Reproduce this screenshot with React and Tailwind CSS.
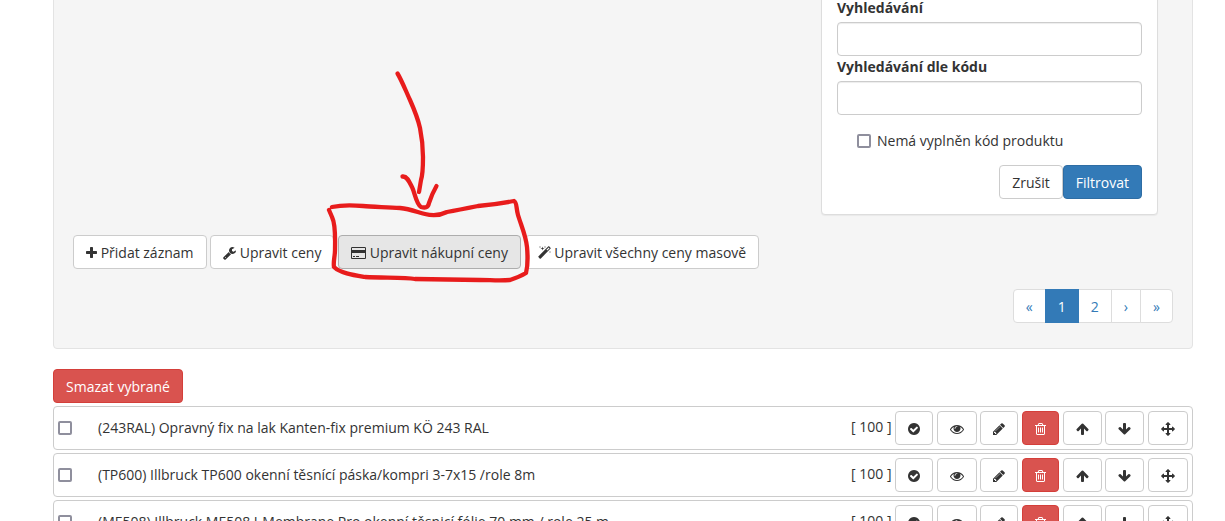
import { Fragment } from 'react'
import clsx from 'clsx'

// Icons share a 1792-unit em; each one keeps its own advance width.
const ICONS = {
  plus: {
    box: '192 0 1408 1792',
    size: 'w-[11px]',
    path: 'M1600 736v192q0 40-28 68t-68 28h-416v416q0 40-28 68t-68 28h-192q-40 0-68-28t-28-68v-416h-416q-40 0-68-28t-28-68v-192q0-40 28-68t68-28h416v-416q0-40 28-68t68-28h192q40 0 68 28t28 68v416h416q40 0 68 28t28 68z',
  },
  wrench: {
    box: '64 0 1664 1792',
    size: 'w-[13px]',
    path: 'M448 1472q0-26-19-45t-45-19-45 19-19 45 19 45 45 19 45-19 19-45zm644-420l-682 682q-37 37-90 37-52 0-91-37l-106-108q-38-36-38-90 0-53 38-91l681-681q39 98 114.5 173.5t173.5 114.5zm634-435q0 39-23 106-47 134-164.5 217.5t-258.5 83.5q-185 0-316.5-131.5t-131.5-316.5 131.5-316.5 316.5-131.5q58 0 121.5 16.5t107.5 46.5q16 11 16 28t-16 28l-293 169v224l193 107q5-3 79-48.5t135.5-81 70.5-35.5q15 0 23.5 10t8.5 25z',
  },
  card: {
    box: '0 0 1920 1792',
    size: 'w-[15px]',
    path: 'M1760 128q66 0 113 47t47 113v1216q0 66-47 113t-113 47h-1600q-66 0-113-47t-47-113v-1216q0-66 47-113t113-47h1600zm-1600 128q-13 0-22.500 9.500t-9.500 22.500v224h1664v-224q0-13-9.500-22.500t-22.500-9.500h-1600zm1600 1280q13 0 22.500-9.500t9.500-22.500v-608h-1664v608q0 13 9.500 22.500t22.500 9.500h1600zm-1504-128v-128h256v128h-256zm384 0v-128h384v128h-384z',
  },
  magic: {
    box: '64 0 1664 1792',
    size: 'w-[13px]',
    path: 'M1254 581l293-293-107-107-293 293zm447-293q0 27-18 45l-1286 1286q-18 18-45 18t-45-18l-198-198q-18-18-18-45t18-45l1286-1286q18-18 45-18t45 18l198 198q18 18 18 45zm-1351-190l98 30-98 30-30 98-30-98-98-30 98-30 30-98zm350 162l196 60-196 60-60 196-60-196-196-60 196-60 60-196zm930 478l98 30-98 30-30 98-30-98-98-30 98-30 30-98zm-640-640l98 30-98 30-30 98-30-98-98-30 98-30 30-98z',
  },
  check: {
    box: '128 0 1536 1792',
    size: 'w-[12px]',
    path: 'M1412 734q0-28-18-46l-91-90q-19-19-45-19t-45 19l-408 407-226-226q-19-19-45-19t-45 19l-91 90q-18 18-18 46 0 27 18 45l362 362q19 19 45 19 27 0 46-19l543-543q18-18 18-45zm252 162q0 209-103 385.5t-279.5 279.5-385.5 103-385.5-103-279.5-279.5-103-385.5 103-385.5 279.5-279.5 385.5-103 385.5 103 279.5 279.5 103 385.5z',
  },
  eye: {
    box: '0 0 1792 1792',
    size: 'w-[14px]',
    path: 'M1664 960q-152-236-381-353 61 104 61 225 0 185-131.5 316.5t-316.5 131.5-316.5-131.5-131.5-316.5q0-121 61-225-229 117-381 353 133 205 333.5 326.5t434.5 121.5 434.5-121.5 333.5-326.5zm-720-384q0-20-14-34t-34-14q-125 0-214.5 89.5t-89.5 214.5q0 20 14 34t34 14 34-14 14-34q0-86 61-147t147-61q20 0 34-14t14-34zm848 384q0 34-20 69-140 230-376.5 368.5t-499.5 138.5-499.5-139-376.5-368q-20-35-20-69t20-69q140-229 376.5-368t499.5-139 499.5 139 376.5 368q20 35 20 69z',
  },
  pencil: {
    box: '128 0 1536 1792',
    size: 'w-[12px]',
    path: 'M491 1536l91-91-235-235-91 91v107h128v128h107zm523-928q0-22-22-22-10 0-17 7l-542 542q-7 7-7 17 0 22 22 22 10 0 17-7l542-542q7-7 7-17zm-54-192l416 416-832 832h-416v-416zm683 96q0 53-37 90l-166 166-416-416 166-165q36-38 90-38 53 0 91 38l235 234q37 39 37 91z',
  },
  trash: {
    box: '192 0 1408 1792',
    size: 'w-[11px]',
    path: 'M704 736v576q0 14-9 23t-23 9h-64q-14 0-23-9t-9-23v-576q0-14 9-23t23-9h64q14 0 23 9t9 23zm256 0v576q0 14-9 23t-23 9h-64q-14 0-23-9t-9-23v-576q0-14 9-23t23-9h64q14 0 23 9t9 23zm256 0v576q0 14-9 23t-23 9h-64q-14 0-23-9t-9-23v-576q0-14 9-23t23-9h64q14 0 23 9t9 23zm128 724v-948h-896v948q0 22 7 40.5t14.5 27 10.5 8.5h832q3 0 10.5-8.5t14.5-27 7-40.5zm-672-1076h448l-48-117q-7-9-17-11h-317q-10 2-17 11zm928 32v64q0 14-9 23t-23 9h-96v948q0 83-47 143.5t-113 60.5h-832q-66 0-113-58.5t-47-141.5v-952h-96q-14 0-23-9t-9-23v-64q0-14 9-23t23-9h309l70-167q15-37 54-63t79-26h320q40 0 79 26t54 63l70 167h309q14 0 23 9t9 23z',
  },
  up: {
    box: '64 0 1664 1792',
    size: 'w-[13px]',
    path: 'M1675 971q0 51-37 90l-75 75q-38 38-91 38-54 0-90-38l-294-293v704q0 52-37.5 84.5t-90.5 32.5h-128q-53 0-90.5-32.5t-37.5-84.5v-704l-294 293q-36 38-90 38t-90-38l-75-75q-38-38-38-90 0-53 38-91l651-651q35-37 90-37 54 0 91 37l651 651q37 39 37 91z',
  },
  down: {
    box: '64 0 1664 1792',
    size: 'w-[13px]',
    path: 'M1675 832q0 53-37 90l-651 652q-39 37-91 37-53 0-90-37l-651-652q-38-36-38-90 0-53 38-91l74-75q39-37 91-37 53 0 90 37l294 294v-704q0-52 38-90t90-38h128q52 0 90 38t38 90v704l294-294q37-37 90-37 52 0 91 37l75 75q37 39 37 91z',
  },
  move: {
    box: '0 0 1792 1792',
    size: 'w-[14px]',
    path: 'M1792 896q0 26-19 45l-256 256q-19 19-45 19t-45-19-19-45v-128h-384v384h128q26 0 45 19t19 45-19 45l-256 256q-19 19-45 19t-45-19l-256-256q-19-19-19-45t19-45 45-19h128v-384h-384v128q0 26-19 45t-45 19-45-19l-256-256q-19-19-19-45t19-45l256-256q19-19 45-19t45 19 19 45v128h384v-384h-128q-26 0-45-19t-19-45 19-45l256-256q19-19 45-19t45 19l256 256q19 19 19 45t-19 45-45 19h-128v384h384v-128q0-26 19-45t45-19 45 19l256 256q19 19 19 45z',
  },
}

const PRODUCTS = [
  { code: '243RAL', name: 'Opravný fix na lak Kanten-fix premium KÖ 243 RAL', order: 100 },
  { code: 'TP600', name: 'Illbruck TP600 okenní těsnící páska/kompri 3-7x15 /role 8m', order: 100 },
  { code: 'ME508', name: 'Illbruck ME508 I-Membrane Pro okenní těsnicí fólie 70 mm / role 25 m', order: 100 },
]

const ROW_ACTIONS = [
  { icon: 'check', label: 'Aktivní' },
  { icon: 'eye', label: 'Zobrazit' },
  { icon: 'pencil', label: 'Upravit' },
  { icon: 'trash', label: 'Smazat', variant: 'danger' },
  { icon: 'up', label: 'Nahoru' },
  { icon: 'down', label: 'Dolů' },
  { icon: 'move', label: 'Přesunout' },
]

const PAGES = ['«', '1', '2', '›', '»']

const VARIANTS = {
  default: 'bg-white border-[#ccc] text-[#333]',
  active: 'bg-[#e6e6e6] border-[#adadad] text-[#333]',
  primary: 'bg-[#337ab7] border-[#2e6da4] text-white',
  danger: 'bg-[#d9534f] border-[#d43f3a] text-white',
}

const Icon = ({ name }) => {
  const { box, size, path } = ICONS[name]
  return (
    <svg viewBox={box} className={clsx('inline-block h-[14px] align-[-2px]', size)} fill="currentColor" aria-hidden="true">
      <path d={path} />
    </svg>
  )
}

const Button = ({ variant = 'default', children, ...props }) => (
  <button
    type="button"
    className={clsx('inline-block px-3 pt-[7px] pb-[5px] border rounded-sm text-sm leading-5 whitespace-nowrap align-middle cursor-pointer', VARIANTS[variant])}
    {...props}
  >
    {children}
  </button>
)

const Checkbox = (props) => (
  <input
    type="checkbox"
    className="appearance-none shrink-0 size-[14px] border-2 border-[#8f8f9d] rounded-xs bg-white checked:bg-[#337ab7]"
    {...props}
  />
)

const Field = ({ id, label }) => (
  <>
    <label htmlFor={id} className="block pt-px mb-1 font-bold">{label}</label>
    <input id={id} type="text" className="block w-full h-[34px] px-3 bg-white border border-[#ccc] rounded-sm shadow-[inset_0_1px_1px_rgba(0,0,0,0.075)]" />
  </>
)

const FilterCard = () => (
  <form className="w-[337px] ml-auto mr-[15px] p-[15px] bg-white border border-[#ddd] rounded-sm shadow-[0_1px_1px_rgba(0,0,0,0.05)]">
    <Field id="search" label="Vyhledávání" />
    <Field id="search-code" label="Vyhledávání dle kódu" />
    <label className="flex items-center gap-[6px] mt-4 mb-[14px] pl-5">
      <Checkbox />
      Nemá vyplněn kód produktu
    </label>
    <div className="flex justify-end">
      <Button>Zrušit</Button>
      <Button variant="primary">Filtrovat</Button>
    </div>
  </form>
)

const Toolbar = () => (
  <div className="mt-5">
    <Button><Icon name="plus" /> Přidat záznam</Button>{' '}
    <Button><Icon name="wrench" /> Upravit ceny</Button>{' '}
    <Button variant="active"><Icon name="card" /> Upravit nákupní ceny</Button>{' '}
    <Button><Icon name="magic" /> Upravit všechny ceny masově</Button>
  </div>
)

const Pagination = () => (
  <nav className="flex justify-end mt-5" aria-label="Stránkování">
    {PAGES.map((page) => (
      <a
        key={page}
        href="#"
        className={clsx(
          'px-3 pt-[7px] pb-[5px] border -ml-px first:ml-0 first:rounded-l-sm last:rounded-r-sm',
          page === '1' ? 'relative bg-[#337ab7] border-[#337ab7] text-white' : 'bg-white border-[#ddd] text-[#337ab7]'
        )}
      >
        {page}
      </a>
    ))}
  </nav>
)

const ProductRow = ({ product }) => (
  <li className="flex items-center p-1 border border-[#ccc] rounded-sm bg-white">
    <Checkbox aria-label={product.code} />
    <span className="ml-[26px] flex-1 min-w-0 truncate">({product.code}) {product.name}</span>
    <div className="whitespace-nowrap">
      [ {product.order} ]
      {ROW_ACTIONS.map(({ icon, label, variant }) => (
        <Fragment key={icon}>
          {' '}
          <Button variant={variant} aria-label={label}><Icon name={icon} /></Button>
        </Fragment>
      ))}
    </div>
  </li>
)

// Hand-drawn marker strokes pointing at the purchase price button
const Annotation = () => (
  <svg
    className="absolute left-0 top-0 w-[540px] h-[300px] pointer-events-none"
    viewBox="0 0 540 300"
    fill="none"
    stroke="#e81c1c"
    strokeWidth="4.3"
    strokeLinecap="round"
    strokeLinejoin="round"
    aria-hidden="true"
  >
    <path d="M397.500 73.500C401 79 405 89 410 100C414 109 418 119 420 128C422 138 423 148 423 157C423 166 423 174 421 180L419 192" />
    <path d="M402.500 176.500C407 176 409 181 412 187C415 193 416 204 421 207C425 208 428 208 429 203C431 197 433 192 436.500 186" />
    <path d="M332 207C341 205 352 205 363 206C372 207 386 207 400 208C410 209 417 212 425 214C433 216 441 215 447 212C458 210 468 208 478 206C490 205 504 203 514 201C517 202 516 208 518 215C521 225 526 236 527 247C528 257 528 265 526 273C521 276 516 278 510 280C500 281 490 280 480 280L415 279C405 277 385 278 365 277C353 275 340 273 334 267C333 262 335 256 335 250C335 239 336 225 332 217L329 210" />
  </svg>
)

const App = () => (
  <div className="relative h-screen overflow-hidden bg-white pl-[53px] pr-8 text-sm leading-5 text-[#333] font-['Open_Sans','Noto_Sans',sans-serif]">
    <section className="-mt-5 px-[19px] pb-[25px] bg-[#f5f5f5] border border-[#e3e3e3] rounded-sm">
      <FilterCard />
      <Toolbar />
      <Pagination />
    </section>

    <div className="mt-5">
      <Button variant="danger">Smazat vybrané</Button>
    </div>
    <ul className="flex flex-col gap-[3px] mt-[3px]">
      {PRODUCTS.map((product) => (
        <ProductRow key={product.code} product={product} />
      ))}
    </ul>

    <Annotation />
  </div>
)

export default App
